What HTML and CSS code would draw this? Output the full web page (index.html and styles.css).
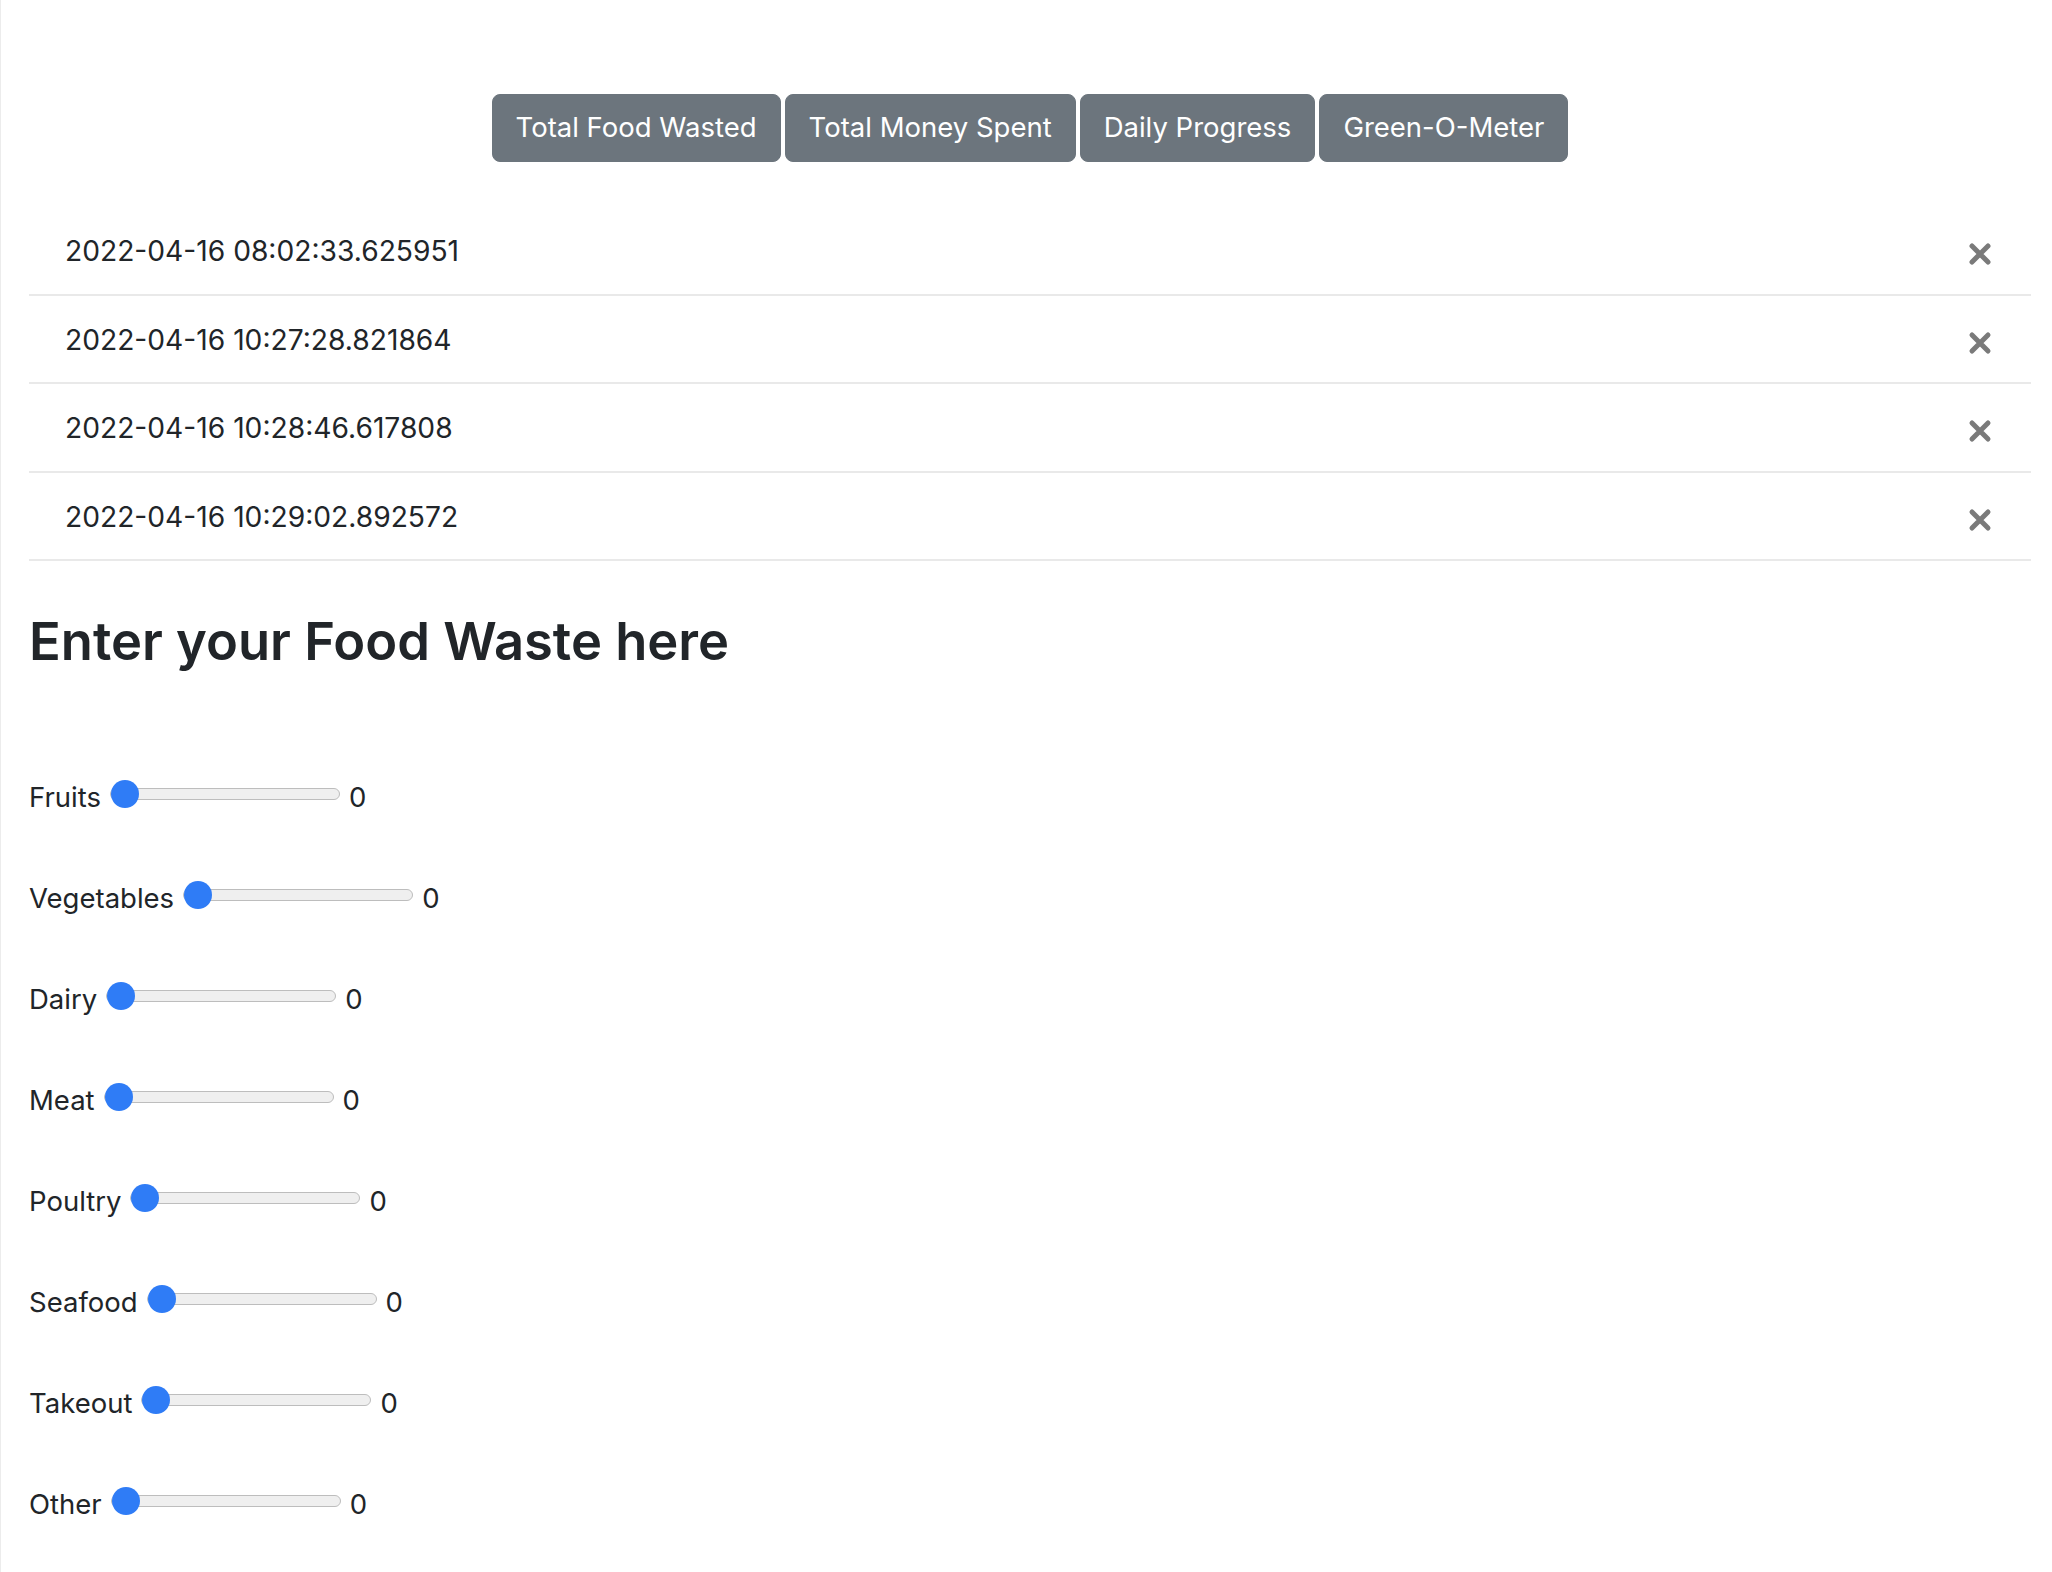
FILE: index.html
```html
<!DOCTYPE html>
<html lang="en">
<head>
<meta charset="utf-8">
<title>Food Waste Tracker</title>
<link rel="stylesheet" href="styles.css">
</head>
<body>
<div class="page">
  <nav class="toolbar">
    <button class="btn" type="button">Total Food Wasted</button>
    <button class="btn" type="button">Total Money Spent</button>
    <button class="btn" type="button">Daily Progress</button>
    <button class="btn" type="button">Green-O-Meter</button>
  </nav>

  <ul class="entries">
    <li class="entry"><span class="stamp">2022-04-16 08:02:33.625951</span><button class="remove" type="button" aria-label="Delete"><svg viewBox="0 0 24 24" width="24" height="24"><path d="M4 4L20 20M20 4L4 20"/></svg></button></li>
    <li class="entry"><span class="stamp">2022-04-16 10:27:28.821864</span><button class="remove" type="button" aria-label="Delete"><svg viewBox="0 0 24 24" width="24" height="24"><path d="M4 4L20 20M20 4L4 20"/></svg></button></li>
    <li class="entry"><span class="stamp">2022-04-16 10:28:46.617808</span><button class="remove" type="button" aria-label="Delete"><svg viewBox="0 0 24 24" width="24" height="24"><path d="M4 4L20 20M20 4L4 20"/></svg></button></li>
    <li class="entry"><span class="stamp">2022-04-16 10:29:02.892572</span><button class="remove" type="button" aria-label="Delete"><svg viewBox="0 0 24 24" width="24" height="24"><path d="M4 4L20 20M20 4L4 20"/></svg></button></li>
  </ul>

  <h2 class="title">Enter your Food Waste here</h2>

  <form class="waste-form">
    <div class="field"><label for="fruits">Fruits</label><input id="fruits" type="range" min="0" max="10" value="0"><span class="value">0</span></div>
    <div class="field"><label for="vegetables">Vegetables</label><input id="vegetables" type="range" min="0" max="10" value="0"><span class="value">0</span></div>
    <div class="field"><label for="dairy">Dairy</label><input id="dairy" type="range" min="0" max="10" value="0"><span class="value">0</span></div>
    <div class="field"><label for="meat">Meat</label><input id="meat" type="range" min="0" max="10" value="0"><span class="value">0</span></div>
    <div class="field"><label for="poultry">Poultry</label><input id="poultry" type="range" min="0" max="10" value="0"><span class="value">0</span></div>
    <div class="field"><label for="seafood">Seafood</label><input id="seafood" type="range" min="0" max="10" value="0"><span class="value">0</span></div>
    <div class="field"><label for="takeout">Takeout</label><input id="takeout" type="range" min="0" max="10" value="0"><span class="value">0</span></div>
    <div class="field"><label for="other">Other</label><input id="other" type="range" min="0" max="10" value="0"><span class="value">0</span></div>
  </form>
</div>
</body>
</html>
```

FILE: styles.css
```css
* { box-sizing: border-box; }

html, body {
  margin: 0;
  padding: 0;
  background: #ffffff;
}

body {
  font-family: Inter, "Liberation Sans", Arial, sans-serif;
  color: #212529;
  border-left: 1px solid #ececec;
  min-height: 100vh;
}

.page {
  padding: 94px 21px 0 28px;
}

.toolbar {
  display: flex;
  justify-content: center;
  gap: 4px;
}

.btn {
  font-family: inherit;
  font-size: 27.5px;
  line-height: 1;
  height: 68px;
  padding: 0 23px;
  color: #ffffff;
  background: #6c757d;
  border: 1px solid #6c757d;
  border-radius: 8px;
}

.entries {
  list-style: none;
  margin: 45px 0 0 0;
  padding: 0;
}

.entry {
  display: flex;
  align-items: center;
  justify-content: space-between;
  height: 88.5px;
  padding: 2px 39px 0 36px;
  border-bottom: 2px solid #e9e9e9;
  font-size: 28.2px;
}

.remove {
  display: flex;
  padding: 0;
  margin: 6px 0 0 0;
  border: 0;
  background: transparent;
}

.remove svg path {
  fill: none;
  stroke: #7a7a7a;
  stroke-width: 5;
  stroke-linecap: round;
}

.title {
  margin: 49px 0 0 0;
  font-size: 52.5px;
  font-weight: 600;
  line-height: 1.2;
}

.waste-form {
  margin-top: 73px;
}

.field {
  display: flex;
  align-items: center;
  gap: 9px;
  height: 101px;
  font-size: 27.5px;
}

.field input[type=range] {
  -webkit-appearance: none;
  appearance: none;
  width: 230px;
  height: 28px;
  margin: 0 0 6px 0;
  background: transparent;
}

.field input[type=range]::-webkit-slider-runnable-track {
  height: 12px;
  background: #efefef;
  border: 1px solid #bdbdbd;
  border-radius: 6px;
}

.field input[type=range]::-webkit-slider-thumb {
  -webkit-appearance: none;
  appearance: none;
  width: 28px;
  height: 28px;
  margin-top: -9px;
  border: 0;
  border-radius: 50%;
  background: #2f7cf6;
}
```
